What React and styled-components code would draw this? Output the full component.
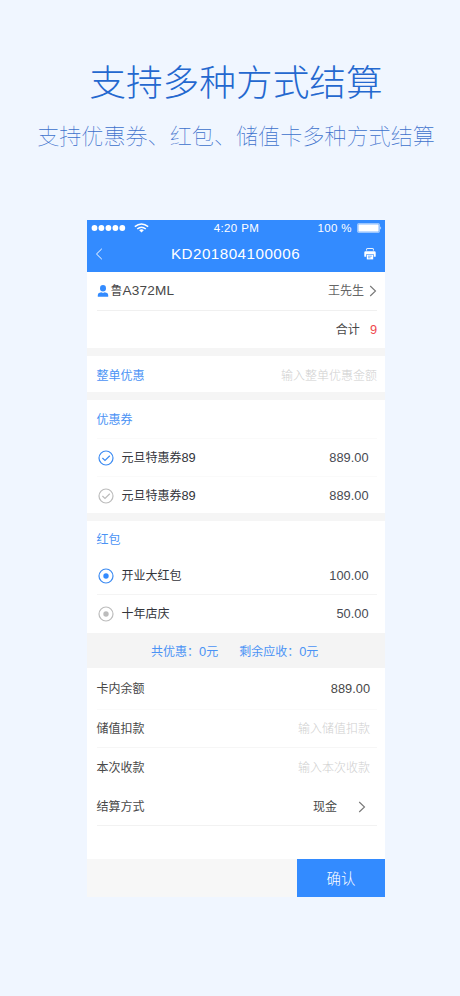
import React from 'react';
import styled, { createGlobalStyle } from 'styled-components';

const GlobalStyle = createGlobalStyle`
  * { box-sizing: border-box; }
  body {
    margin: 0;
    background: #f0f6ff;
    font-family: "Liberation Sans", "Noto Sans CJK SC", sans-serif;
  }
`;

const Page = styled.main`
  height: 996px;
  overflow: hidden;
  padding-top: 53px;
  background: #f0f6ff;
`;

const Title = styled.h1`
  margin: 0 0 0 12px;
  height: 54px;
  font: 300 36.7px/54px "Noto Sans CJK SC", sans-serif;
  color: #2468cf;
  text-align: center;
  white-space: nowrap;
`;

const Subtitle = styled.p`
  margin: 11px 0 0 12px;
  height: 32px;
  font: 100 22.1px/32px "Noto Sans CJK SC", sans-serif;
  color: #3c70cc;
  text-align: center;
  white-space: nowrap;
`;

const Phone = styled.section`
  width: 298px;
  height: 677px;
  margin: 70px 0 0 87px;
  display: flex;
  flex-direction: column;
  background: #fff;
`;

const Header = styled.header`
  height: 52px;
  flex: none;
  background: #338bff;
  color: #fff;
`;

const StatusBar = styled.div`
  height: 16px;
  display: grid;
  grid-template-columns: 1fr auto 1fr;
  align-items: center;
  padding: 0 3px 0 4px;
  font-size: 11.5px;
  letter-spacing: 0.4px;
  line-height: 16px;
`;

const StatusGroup = styled.div`
  display: flex;
  align-items: center;
  justify-content: ${(p) => (p.$end ? 'flex-end' : 'flex-start')};
  gap: ${(p) => (p.$end ? 5 : 8)}px;
`;

const NavBar = styled.div`
  height: 36px;
  display: grid;
  grid-template-columns: 1fr auto 1fr;
  align-items: center;
  padding: 0 9px 0 8px;
`;

const NavTitle = styled.div`
  font-size: 15.2px;
  letter-spacing: 0.48px;
  line-height: 20px;
`;

const NavEnd = styled.div`
  display: flex;
  justify-content: flex-end;
`;

const Band = styled.div`
  height: 8px;
  flex: none;
  background: #f5f5f5;
`;

const Row = styled.div`
  height: ${(p) => p.$h}px;
  flex: none;
  display: flex;
  align-items: center;
  margin: 0 8px 0 9.5px;
  padding-right: ${(p) => p.$end || 0}px;
  padding-top: ${(p) => p.$drop || 0}px;
  border-bottom: 1px solid ${(p) => p.$line || 'transparent'};
  font-size: 12px;
  line-height: 18px;
  white-space: nowrap;
  color: ${(p) => p.$color || '#484848'};
`;

const Label = styled.span`
  margin-left: ${(p) => p.$inset || 0}px;
`;

const Value = styled.span`
  margin-left: auto;
  color: ${(p) => p.$color || 'inherit'};
`;

const Digits = styled.span`
  font-size: 12.8px;
  color: ${(p) => p.$color || 'inherit'};
  margin-left: ${(p) => p.$gap || 0}px;
`;

const Plate = styled.span`
  font-size: 13.6px;
  letter-spacing: 0.2px;
`;

const Placeholder = styled.span`
  margin-left: auto;
  font-weight: 300;
  color: #cfcfcf;
`;

const Summary = styled.div`
  height: 35px;
  flex: none;
  display: flex;
  align-items: center;
  gap: 21px;
  padding-left: 64px;
  background: #f4f4f4;
  color: #4b93f5;
  font-size: 12px;
  white-space: nowrap;
`;

const Footer = styled.footer`
  height: 38px;
  flex: none;
  margin-top: auto;
  display: flex;
  justify-content: flex-end;
  background: #f7f7f7;
`;

const Confirm = styled.button`
  width: 88px;
  border: 0;
  padding: 0;
  background: #338bff;
  color: #fff;
  font: 300 14.4px/38px "Noto Sans CJK SC", sans-serif;
`;

const Icon = styled.svg`
  display: block;
  flex: none;
  margin-left: ${(p) => p.$gap || 0}px;
`;

const Signal = () => (
  <Icon width="35" height="8" viewBox="0 0 35 8" fill="#fff">
    {[3.5, 10.4, 17.4, 24.4, 31.3].map((x) => (
      <circle key={x} cx={x} cy="4" r="2.9" />
    ))}
  </Icon>
);

const Wifi = () => (
  <Icon width="15" height="10" viewBox="0 0 15 10" fill="none" stroke="#fff" strokeWidth="1.5">
    <path d="M.8 3.6Q7.5-1.8 14.2 3.6" />
    <path d="M3.2 6Q7.5 2.4 11.8 6" />
    <path d="M5.2 7.2Q7.5 5.5 9.8 7.2L7.5 9.6Z" fill="#fff" stroke="none" />
  </Icon>
);

const Battery = () => (
  <Icon width="25" height="10" viewBox="0 0 25 10">
    <rect x=".5" y=".5" width="22" height="9" rx="1" fill="none" stroke="#fff" strokeOpacity=".5" />
    <rect x="1.3" y="1.3" width="20.4" height="7.4" fill="#fff" />
    <path d="M23.4 3.2Q25 5 23.4 6.8Z" fill="#fff" />
  </Icon>
);

const Back = () => (
  <Icon width="8" height="12" viewBox="0 0 8 12" fill="none" stroke="#fff" strokeWidth="1">
    <path d="M6.8.8 1.5 6l5.3 5.2" />
  </Icon>
);

const Printer = () => (
  <Icon width="12" height="12" viewBox="0 0 12 12">
    <path d="M2.6 2.6V1q0-.5.5-.5h5.8q.5 0 .5.5v1.6" fill="none" stroke="#fff" strokeWidth=".9" />
    <path d="M1.6 3.2h8.8q1.3 0 1.3 1.3v3.7q0 .5-.5.5H9.8V6.3H2.2v2.4H.8q-.5 0-.5-.5V4.5q0-1.3 1.3-1.3Z" fill="#fff" />
    <path d="M2.8 6.8h6.4v4.6H2.8Z" fill="#fff" />
    <path d="M4 8.2h3.8M4 9.8h2.5" stroke="#338bff" strokeWidth=".7" />
  </Icon>
);

const Person = () => (
  <Icon width="12" height="12" viewBox="0 0 12 12" fill="#338bff">
    <ellipse cx="6" cy="3.2" rx="3" ry="3.2" />
    <path d="M.8 11.8V9.9Q.8 8.2 2.6 7.8L4.4 7.3Q6 8.4 7.6 7.3l1.8.5q1.8.4 1.8 2.1v1.9Z" />
  </Icon>
);

const Chevron = ({ gap }) => (
  <Icon $gap={gap} width="8" height="12" viewBox="0 0 8 12" fill="none" stroke="#777" strokeWidth="1.1">
    <path d="M1.2 1 6.5 6 1.2 11" />
  </Icon>
);

const Check = ({ on }) => (
  <Icon width="16" height="16" viewBox="0 0 16 16" fill="none" stroke={on ? '#3c8bf2' : '#bcbcbc'} strokeWidth="1.2">
    <circle cx="8" cy="8" r="7" />
    <path d="M4.4 8 7 10.5l4.8-4.7" />
  </Icon>
);

const Radio = ({ on }) => (
  <Icon width="16" height="16" viewBox="0 0 16 16" fill="none" stroke={on ? '#3c8bf2' : '#bcbcbc'} strokeWidth="1.2">
    <circle cx="8" cy="8" r="7" />
    <circle cx="8" cy="8" r="2.7" fill={on ? '#338bff' : '#bcbcbc'} stroke="none" />
  </Icon>
);

const Option = ({ icon, name, digits, amount, h, line, drop }) => (
  <Row $h={h} $line={line} $drop={drop} $end={8.5} $color="#33353b">
    <Label $inset={1.7}>{icon}</Label>
    <Label $inset={7.3}>
      {name}
      {digits && <Digits>{digits}</Digits>}
    </Label>
    <Value>
      <Digits $color="#484a52">{amount}</Digits>
    </Value>
  </Row>
);

export default function App() {
  return (
    <Page>
      <GlobalStyle />
      <Title>支持多种方式结算</Title>
      <Subtitle>支持优惠券、红包、储值卡多种方式结算</Subtitle>
      <Phone>
        <Header>
          <StatusBar>
            <StatusGroup>
              <Signal />
              <Wifi />
            </StatusGroup>
            <span>4:20 PM</span>
            <StatusGroup $end>
              <span>100 %</span>
              <Battery />
            </StatusGroup>
          </StatusBar>
          <NavBar>
            <Back />
            <NavTitle>KD201804100006</NavTitle>
            <NavEnd>
              <Printer />
            </NavEnd>
          </NavBar>
        </Header>
        <Row $h={39} $line="#f0f0f0">
          <Person />
          <Label $inset={2}>
            鲁<Plate>A372ML</Plate>
          </Label>
          <Value $color="#666">王先生</Value>
          <Chevron gap={5} />
        </Row>
        <Row $h={37} $drop={2}>
          <Value>合计</Value>
          <Digits $gap={10} $color="#f0484d">9</Digits>
        </Row>
        <Band />
        <Row $h={36} $drop={5} $color="#4b93f5">
          <Label>整单优惠</Label>
          <Placeholder>输入整单优惠金额</Placeholder>
        </Row>
        <Band />
        <Row $h={39} $drop={2} $line="#fafafa" $color="#4b93f5">
          <Label>优惠券</Label>
        </Row>
        <Option h={38} line="#fafafa" icon={<Check on />} name="元旦特惠券" digits="89" amount="889.00" />
        <Option h={36} drop={2} icon={<Check />} name="元旦特惠券" digits="89" amount="889.00" />
        <Band />
        <Row $h={36} $drop={2} $color="#4b93f5">
          <Label>红包</Label>
        </Row>
        <Option h={38} line="#f4f4f4" icon={<Radio on />} name="开业大红包" amount="100.00" />
        <Option h={38} icon={<Radio />} name="十年店庆" amount="50.00" />
        <Summary>
          <span>共优惠：<Digits>0</Digits>元</span>
          <span>剩余应收：<Digits>0</Digits>元</span>
        </Summary>
        <Row $h={42} $line="#fafafa" $end={7}>
          <Label>卡内余额</Label>
          <Value>
            <Digits>889.00</Digits>
          </Value>
        </Row>
        <Row $h={38} $line="#f6f6f6" $end={7}>
          <Label>储值扣款</Label>
          <Placeholder>输入储值扣款</Placeholder>
        </Row>
        <Row $h={39} $drop={1} $end={7}>
          <Label>本次收款</Label>
          <Placeholder>输入本次收款</Placeholder>
        </Row>
        <Row $h={39} $drop={1} $line="#f2f2f2" $end={11}>
          <Label>结算方式</Label>
          <Value>现金</Value>
          <Chevron gap={21} />
        </Row>
        <Footer>
          <Confirm>确认</Confirm>
        </Footer>
      </Phone>
    </Page>
  );
}
